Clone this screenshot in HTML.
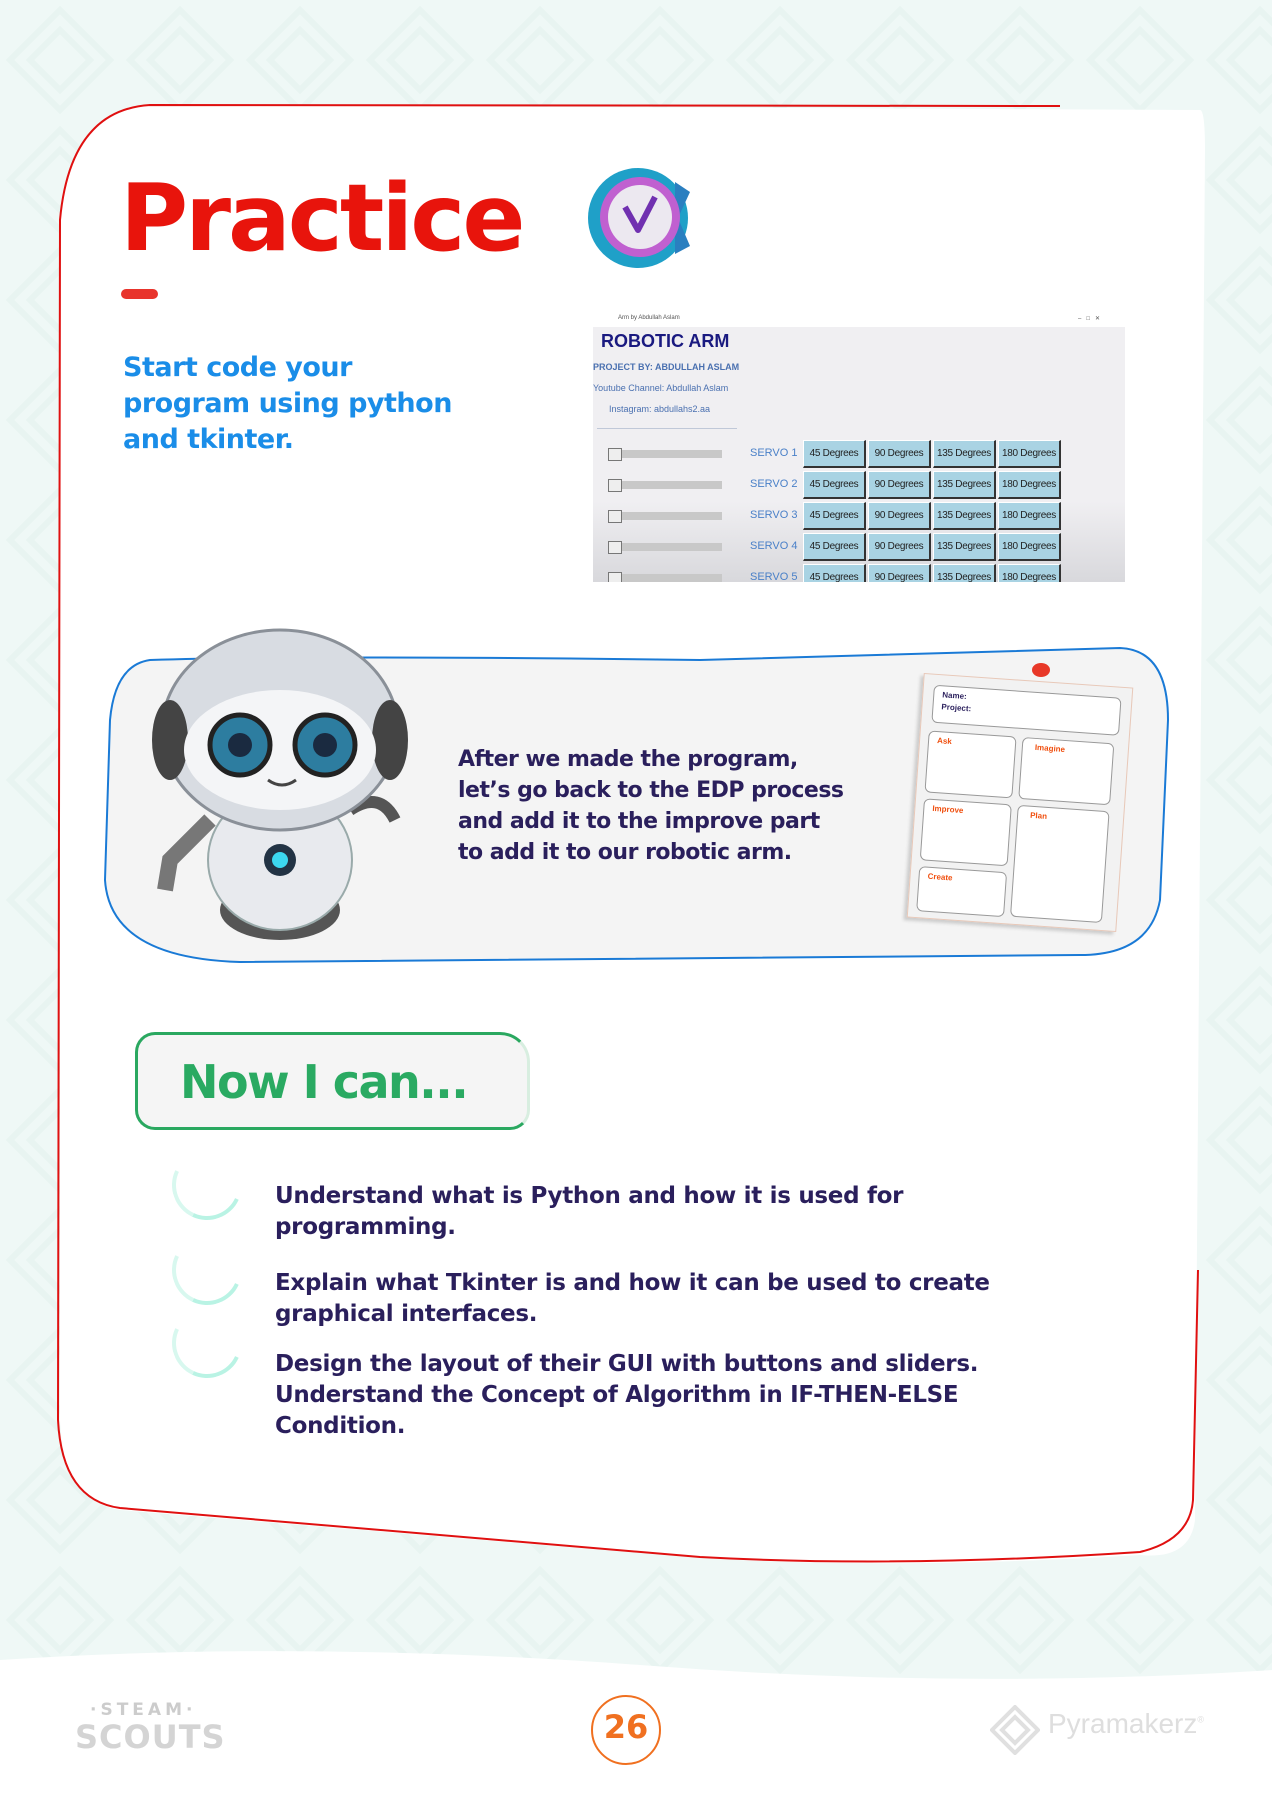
<!DOCTYPE html>
<html><head><meta charset="utf-8"><style>
*{margin:0;padding:0;box-sizing:border-box}
body{width:1272px;height:1800px;position:relative;overflow:hidden;background:#eff8f6;font-family:"Liberation Sans",sans-serif}
.abs{position:absolute}
.round{font-family:"DejaVu Sans","Liberation Sans",sans-serif;font-weight:bold}
.btn{position:absolute;width:63px;height:28px;background:#a9d3e3;border:1px solid #fff;border-right:2px solid #333;border-bottom:2px solid #333;font-size:10px;color:#222;text-align:center;line-height:26px;letter-spacing:-.3px}
.sv{position:absolute;left:157px;font-size:11px;color:#4a80c8}
.sl{position:absolute;left:15px;width:114px;height:8px;background:#c8c8c8}
.sl:before{content:"";position:absolute;left:0;top:-2px;width:12px;height:11px;border:1px solid #777;background:#eee}
.bt{position:absolute;left:275px;font-size:23px;line-height:31px;color:#2a1f5c;letter-spacing:-.3px}
.chk{position:absolute;left:172px;width:70px;height:70px;border-radius:50%;border:4px solid transparent;border-bottom-color:#b9f3e4;border-left-color:#d8f8ef;transform:rotate(-20deg)}
</style></head><body>
<svg class="abs" style="left:0;top:0" width="1272" height="1800">
<defs><pattern id="p" width="120" height="120" patternUnits="userSpaceOnUse"><path d="M60 10 L110 60 L60 110 L10 60Z M60 30 L90 60 L60 90 L30 60Z" fill="none" stroke="#e8f4f1" stroke-width="6"/></pattern></defs>
<rect width="1272" height="1800" fill="url(#p)"/>
<path d="M0 1660 Q300 1640 640 1665 Q960 1690 1272 1670 L1272 1800 L0 1800Z" fill="#fff"/>
<path d="M150 105 L1200 110 Q1205 110 1205 150 L1195 1520 Q1190 1560 1140 1555 Q900 1570 700 1558 L120 1510 Q62 1500 60 1420 L60 220 Q70 110 150 105Z" fill="#fff"/>
<path d="M1060 106 L150 105 Q70 110 60 220 L58 1420 Q62 1500 120 1508 L700 1557 Q900 1568 1140 1552 Q1190 1540 1193 1500 L1198 1270" fill="none" stroke="#e01010" stroke-width="2"/>
<path d="M150 660 Q320 655 700 660 L1120 648 Q1168 650 1168 720 L1160 900 Q1150 955 1080 955 L240 962 Q110 958 105 880 L110 720 Q115 665 150 660Z" fill="#f4f4f4" stroke="#1a7ad6" stroke-width="2"/>
</svg>
<div class="abs round" style="left:120px;top:163px;font-size:93px;color:#e8140c;letter-spacing:-3px;line-height:110px">Practice</div>
<div class="abs" style="left:121px;top:289px;width:37px;height:10px;border-radius:5px;background:#e8342c"></div>
<svg class="abs" style="left:580px;top:162px" width="115" height="112"><circle cx="58" cy="56" r="50" fill="#1fa0c8"/><path d="M95 20 L110 30 L98 56 L110 84 L95 92Z" fill="#2a7fc0"/><circle cx="60" cy="55" r="40" fill="#c060d0"/><circle cx="60" cy="55" r="32" fill="#ece8f0"/><path d="M45 45 L58 68 L75 35" fill="none" stroke="#7030b0" stroke-width="6" stroke-linejoin="round"/></svg>
<div class="abs round" style="left:123px;top:350px;font-size:27px;line-height:36px;color:#1a8de8;letter-spacing:-.5px">Start code your<br>program using python<br>and tkinter.</div>
<div class="abs" style="left:593px;top:313px;width:532px;height:269px;background:linear-gradient(#f0eff2 70%,#d8d8dc);overflow:hidden">
<div class="abs" style="left:0;top:0;width:532px;height:14px;background:#fff;font-size:6px;color:#555;padding:2px 25px">Arm by Abdullah Aslam<span style="float:right">–&nbsp;&nbsp;&nbsp;□&nbsp;&nbsp;&nbsp;✕</span></div>
<div class="abs" style="left:8px;top:18px;font-size:18px;font-weight:bold;color:#1a1a80">ROBOTIC ARM</div>
<div class="abs" style="left:0;top:49px;font-size:9px;color:#4a70b0;font-weight:bold">PROJECT BY: ABDULLAH ASLAM</div>
<div class="abs" style="left:0;top:70px;font-size:9px;color:#4a70b0">Youtube Channel: Abdullah Aslam</div>
<div class="abs" style="left:16px;top:91px;font-size:9px;color:#4a70b0">Instagram: abdullahs2.aa</div>
<div class="abs" style="left:4px;top:115px;width:140px;height:1px;background:#c0c8d8"></div>
<div class="sl" style="top:137px"></div><div class="sl" style="top:168px"></div><div class="sl" style="top:199px"></div><div class="sl" style="top:230px"></div><div class="sl" style="top:261px"></div>
<div class="sv" style="top:134px">SERVO 1</div><div class="sv" style="top:165px">SERVO 2</div><div class="sv" style="top:196px">SERVO 3</div><div class="sv" style="top:227px">SERVO 4</div><div class="sv" style="top:258px">SERVO 5</div>
<div class="btn" style="left:210px;top:127px">45 Degrees</div><div class="btn" style="left:275px;top:127px">90 Degrees</div><div class="btn" style="left:340px;top:127px">135 Degrees</div><div class="btn" style="left:405px;top:127px">180 Degrees</div>
<div class="btn" style="left:210px;top:158px">45 Degrees</div><div class="btn" style="left:275px;top:158px">90 Degrees</div><div class="btn" style="left:340px;top:158px">135 Degrees</div><div class="btn" style="left:405px;top:158px">180 Degrees</div>
<div class="btn" style="left:210px;top:189px">45 Degrees</div><div class="btn" style="left:275px;top:189px">90 Degrees</div><div class="btn" style="left:340px;top:189px">135 Degrees</div><div class="btn" style="left:405px;top:189px">180 Degrees</div>
<div class="btn" style="left:210px;top:220px">45 Degrees</div><div class="btn" style="left:275px;top:220px">90 Degrees</div><div class="btn" style="left:340px;top:220px">135 Degrees</div><div class="btn" style="left:405px;top:220px">180 Degrees</div>
<div class="btn" style="left:210px;top:251px">45 Degrees</div><div class="btn" style="left:275px;top:251px">90 Degrees</div><div class="btn" style="left:340px;top:251px">135 Degrees</div><div class="btn" style="left:405px;top:251px">180 Degrees</div>
</div>
<svg class="abs" style="left:150px;top:620px" width="280" height="325">
<ellipse cx="130" cy="290" rx="60" ry="30" fill="#555"/>
<ellipse cx="130" cy="240" rx="72" ry="70" fill="#e8eaee" stroke="#9aa" stroke-width="2"/>
<circle cx="130" cy="240" r="16" fill="#234"/><circle cx="130" cy="240" r="8" fill="#3cd8f0"/>
<path d="M60 200 L20 240 L15 270" stroke="#777" stroke-width="16" fill="none"/>
<path d="M200 190 Q230 170 245 200" stroke="#555" stroke-width="12" fill="none"/>
<ellipse cx="130" cy="110" rx="118" ry="100" fill="#d8dce2" stroke="#8a9098" stroke-width="3"/>
<ellipse cx="20" cy="120" rx="18" ry="40" fill="#444"/><ellipse cx="240" cy="120" rx="18" ry="40" fill="#444"/>
<ellipse cx="130" cy="130" rx="96" ry="60" fill="#f4f5f7"/>
<circle cx="90" cy="125" r="30" fill="#2d7da0" stroke="#222" stroke-width="5"/><circle cx="175" cy="125" r="30" fill="#2d7da0" stroke="#222" stroke-width="5"/>
<circle cx="90" cy="125" r="12" fill="#1a2a40"/><circle cx="175" cy="125" r="12" fill="#1a2a40"/>
<path d="M118 160 Q132 170 146 160" stroke="#444" stroke-width="3" fill="none"/>
</svg>
<div class="abs round" style="left:458px;top:744px;font-size:22px;line-height:31px;color:#2a1f5c;letter-spacing:-.5px">After we made the program,<br>let’s go back to the EDP process<br>and add it to the improve part<br>to add it to our robotic arm.</div>
<div class="abs" style="left:915px;top:680px;width:210px;height:245px;background:#f2f2f2;border:1px solid #e8c8b8;transform:rotate(4deg);box-shadow:-3px 3px 3px #ccc">
<div class="abs" style="left:10px;top:10px;width:188px;height:38px;background:#fff;border:1px solid #999;border-radius:6px;font-size:8px;font-weight:bold;color:#2a1f5c;padding:3px 8px;line-height:12px">Name:<br>Project:</div>
<div class="abs" style="left:8px;top:56px;width:88px;height:62px;background:#fff;border:1px solid #999;border-radius:6px;font-size:8px;color:#f05010;font-weight:bold;padding:4px 8px">Ask</div>
<div class="abs" style="left:102px;top:56px;width:92px;height:62px;background:#fff;border:1px solid #999;border-radius:6px;font-size:8px;color:#f05010;font-weight:bold;padding:4px 12px">Imagine</div>
<div class="abs" style="left:8px;top:124px;width:88px;height:62px;background:#fff;border:1px solid #999;border-radius:6px;font-size:8px;color:#f05010;font-weight:bold;padding:4px 8px">Improve</div>
<div class="abs" style="left:102px;top:124px;width:92px;height:112px;background:#fff;border:1px solid #999;border-radius:6px;font-size:8px;color:#f05010;font-weight:bold;padding:4px 12px">Plan</div>
<div class="abs" style="left:8px;top:192px;width:88px;height:45px;background:#fff;border:1px solid #999;border-radius:6px;font-size:8px;color:#f05010;font-weight:bold;padding:4px 8px">Create</div>
</div>
<div class="abs" style="left:1032px;top:663px;width:18px;height:14px;border-radius:50%;background:#e83828"></div>
<div class="abs" style="left:135px;top:1032px;width:395px;height:98px;background:#f5f5f5;border:3px solid #2aa860;border-radius:20px;border-top-right-radius:30px;border-right-color:#d8eee0"></div>
<div class="abs round" style="left:180px;top:1054px;font-size:46px;color:#2aaa62;letter-spacing:-1.5px;line-height:56px">Now I can...</div>
<div class="chk" style="top:1150px"></div><div class="chk" style="top:1235px"></div><div class="chk" style="top:1308px"></div>
<div class="bt round" style="top:1181px">Understand what is Python and how it is used for<br>programming.</div>
<div class="bt round" style="top:1268px">Explain what Tkinter is and how it can be used to create<br>graphical interfaces.</div>
<div class="bt round" style="top:1349px">Design the layout of their GUI with buttons and sliders.<br>Understand the Concept of Algorithm in IF-THEN-ELSE<br>Condition.</div>
<div class="abs" style="left:591px;top:1695px;width:70px;height:70px;border:2px solid #f07020;border-radius:50%"></div>
<div class="abs round" style="left:591px;top:1708px;width:70px;text-align:center;font-size:32px;color:#f07020">26</div>
<div class="abs round" style="left:90px;top:1700px;font-size:17px;color:#ccc;letter-spacing:4px">·STEAM·</div>
<div class="abs round" style="left:75px;top:1718px;font-size:32px;color:#d4d4d4;letter-spacing:1px">SCOUTS</div>
<svg class="abs" style="left:990px;top:1705px" width="50" height="50"><path d="M25 2 L48 25 L25 48 L2 25Z M25 12 L38 25 L25 38 L12 25Z" fill="none" stroke="#e0e0e0" stroke-width="4"/></svg>
<div class="abs" style="left:1048px;top:1708px;font-size:28px;color:#dedede">Pyramakerz<sup style="font-size:9px">®</sup></div>
</body></html>
